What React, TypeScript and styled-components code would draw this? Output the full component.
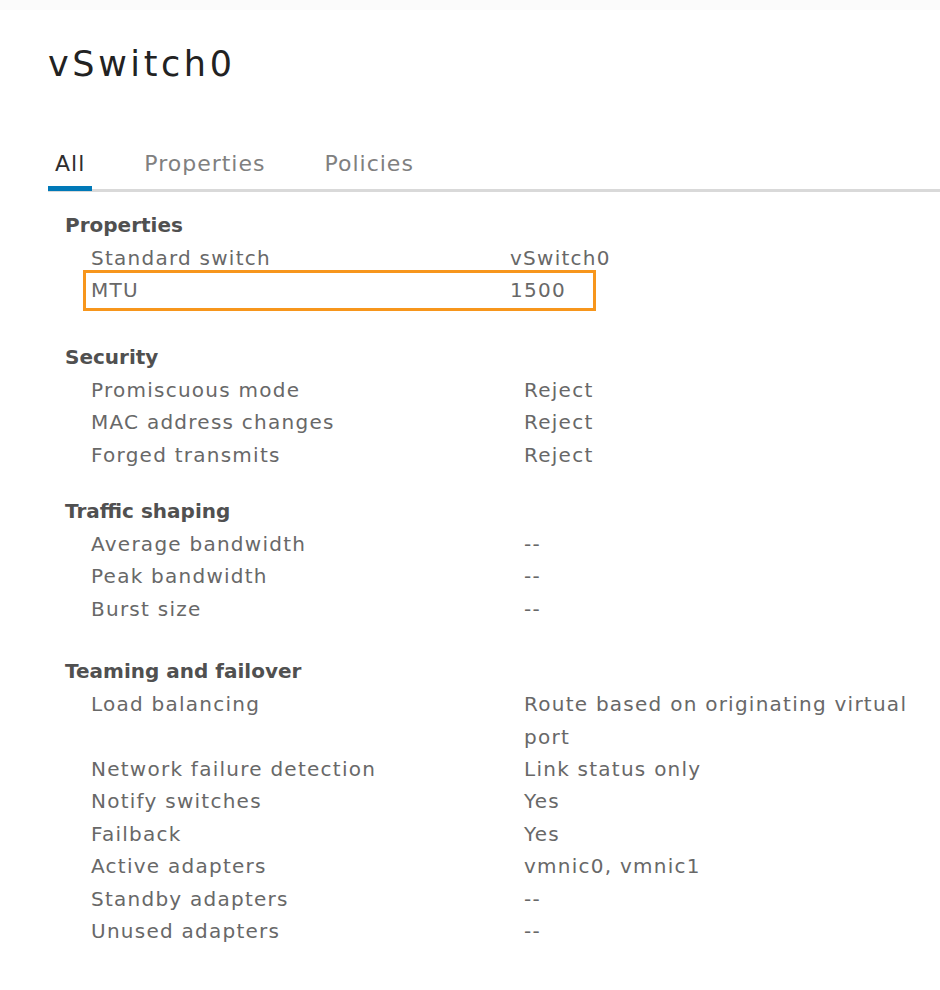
import React from "react";
import styled, { createGlobalStyle } from "styled-components";

const Global = createGlobalStyle`
  html, body { margin: 0; padding: 0; background: #ffffff; }
  body { font-family: "DejaVu Sans", "Open Sans", sans-serif; -webkit-font-smoothing: antialiased; }
`;

const Page = styled.div`
  width: 940px;
  min-height: 990px;
  box-sizing: border-box;
  padding: 34px 0 0 48px;
  background: #fff;
  border-top: 10px solid #fbfbfb;
`;

const Title = styled.h1`
  margin: 0;
  font-size: 35px;
  line-height: 40px;
  font-weight: 400;
  color: #222222;
  letter-spacing: 3.6px;
`;

const TabBar = styled.div`
  display: flex;
  gap: 45px;
  margin-top: 65px;
  border-bottom: 3px solid #d9d9d9;
`;

const Tab = styled.div<{ $active?: boolean }>`
  padding: 0 7px 7px;
  margin-bottom: -2px;
  font-size: 22px;
  line-height: 30px;
  letter-spacing: 1px;
  font-weight: 400;
  color: ${(p) => (p.$active ? "#2e2e2e" : "#808080")};
  border-bottom: 5px solid ${(p) => (p.$active ? "#0079b8" : "transparent")};
`;

const Content = styled.div`
  padding: 17px 0 0 17px;
`;

const Section = styled.section<{ $top: number }>`
  margin-top: ${(p) => p.$top}px;
`;

const Heading = styled.h2`
  margin: 0 0 1px 0;
  font-size: 20px;
  line-height: 32px;
  font-weight: 700;
  color: #505050;
`;

const Row = styled.div<{ $labelWidth: number; $highlight?: boolean }>`
  display: grid;
  grid-template-columns: ${(p) => p.$labelWidth}px 394px;
  padding-left: 26px;
  font-size: 20px;
  line-height: 32.4px;
  letter-spacing: 1.25px;
  color: #686868;
  ${(p) =>
    p.$highlight &&
    `
    width: 505px;
    box-sizing: border-box;
    margin-left: 22px;
    padding-left: 4px;
    outline: 3px solid #f7961c;
    outline-offset: 1px;
  `}
`;

const Label = styled.span`
  white-space: nowrap;
`;

const Value = styled.span``;

type Item = { label: string; value: string; highlight?: boolean };
type Group = { title: string; top: number; labelWidth: number; items: Item[] };

const groups: Group[] = [
  {
    title: "Properties",
    top: 0,
    labelWidth: 419,
    items: [
      { label: "Standard switch", value: "vSwitch0" },
      { label: "MTU", value: "1500", highlight: true },
    ],
  },
  {
    title: "Security",
    top: 34,
    labelWidth: 433,
    items: [
      { label: "Promiscuous mode", value: "Reject" },
      { label: "MAC address changes", value: "Reject" },
      { label: "Forged transmits", value: "Reject" },
    ],
  },
  {
    title: "Traffic shaping",
    top: 24,
    labelWidth: 433,
    items: [
      { label: "Average bandwidth", value: "--" },
      { label: "Peak bandwidth", value: "--" },
      { label: "Burst size", value: "--" },
    ],
  },
  {
    title: "Teaming and failover",
    top: 30,
    labelWidth: 433,
    items: [
      { label: "Load balancing", value: "Route based on originating virtual port" },
      { label: "Network failure detection", value: "Link status only" },
      { label: "Notify switches", value: "Yes" },
      { label: "Failback", value: "Yes" },
      { label: "Active adapters", value: "vmnic0, vmnic1" },
      { label: "Standby adapters", value: "--" },
      { label: "Unused adapters", value: "--" },
    ],
  },
];

export default function App() {
  return (
    <>
      <Global />
      <Page>
        <Title>vSwitch0</Title>
        <TabBar>
          <Tab $active>All</Tab>
          <Tab>Properties</Tab>
          <Tab>Policies</Tab>
        </TabBar>
        <Content>
          {groups.map((g) => (
            <Section key={g.title} $top={g.top}>
              <Heading>{g.title}</Heading>
              {g.items.map((it) => (
                <Row key={it.label} $labelWidth={g.labelWidth} $highlight={it.highlight}>
                  <Label>{it.label}</Label>
                  <Value>{it.value}</Value>
                </Row>
              ))}
            </Section>
          ))}
        </Content>
      </Page>
    </>
  );
}
